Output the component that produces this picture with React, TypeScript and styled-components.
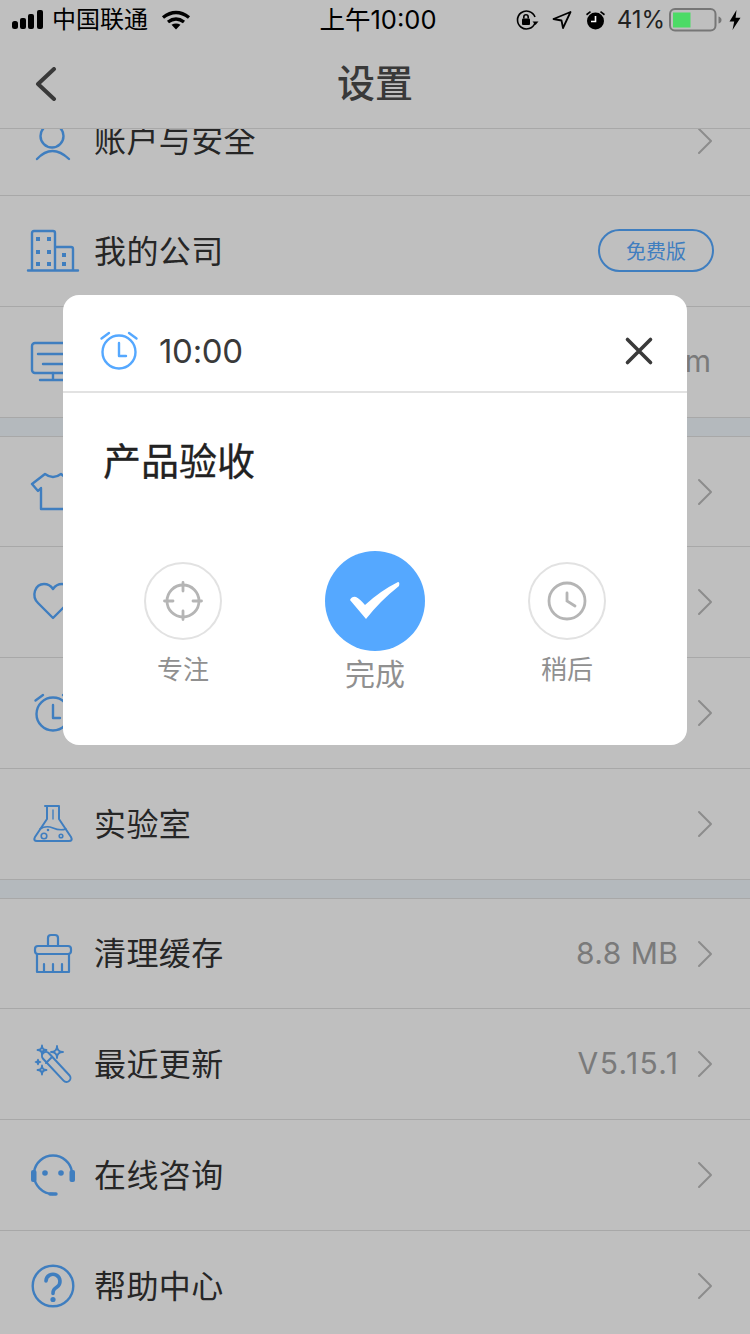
import React from "react";
import styled, { createGlobalStyle } from "styled-components";

const FONT = `Inter, "Noto Sans CJK SC", sans-serif`;

const GlobalStyle = createGlobalStyle`
  html, body {
    margin: 0;
    padding: 0;
    background: #fff;
    font-family: ${FONT};
  }
  * {
    box-sizing: border-box;
  }
`;

const LineIcon = ({ children }: { children: React.ReactNode }) => (
  <IconSvg viewBox="0 0 50 50" fill="none" stroke="currentColor" strokeWidth="2.4" strokeLinecap="round" strokeLinejoin="round">
    {children}
  </IconSvg>
);

const star = (x: number, y: number, s: number) =>
  `M${x} ${y - s}Q${x} ${y} ${x + s} ${y}Q${x} ${y} ${x} ${y + s}Q${x} ${y} ${x - s} ${y}Q${x} ${y} ${x} ${y - s}Z`;

const AlarmShape = () => (
  <>
    <circle cx="25" cy="26" r="16.5" />
    <path d="M25 17V30H32" />
    <path d="M7.5 12.5L15 7M42.5 12.5L35 7" />
  </>
);

const PersonIcon = () => (
  <LineIcon>
    <circle cx="24" cy="20" r="11.5" />
    <path d="M9 43Q24 27 41 43" />
  </LineIcon>
);

const BuildingIcon = () => (
  <LineIcon>
    <path d="M0 44.5H50M4 44V7Q4 5 6 5H25Q27 5 27 7V44M27 21H43Q45 21 45 23V44" />
    <g fill="currentColor" stroke="none">
      {[13, 26, 38].flatMap((y) => [10, 21].map((x) => <rect key={`${x}-${y}`} x={x - 2} y={y - 2} width="4" height="4" />))}
      {[29, 38].map((y) => <rect key={y} x="34" y={y - 2} width="4" height="4" />)}
    </g>
  </LineIcon>
);

const MonitorIcon = () => (
  <LineIcon>
    <rect x="4" y="6" width="42" height="30" rx="3" />
    <path d="M10 17H40M15 27H35M25 36V43M12 43H38" />
  </LineIcon>
);

const ShirtIcon = () => (
  <LineIcon>
    <path d="M4 17L17 7Q25 13 33 7L46 17L40 24L37 21V42H13V21L10 24Z" />
  </LineIcon>
);

const HeartIcon = () => (
  <LineIcon>
    <path d="M25 41L10 26C3 19 7 7 16 7C20 7 23 9 25 12C27 9 30 7 34 7C43 7 47 19 40 26Z" />
  </LineIcon>
);

const AlarmIcon = () => (
  <LineIcon>
    <AlarmShape />
  </LineIcon>
);

const FlaskIcon = () => (
  <LineIcon>
    <path d="M17 7H31M19 7V20L7 38Q5 42 9 42H41Q45 42 43 38L31 20V7" strokeWidth="2" />
    <path d="M12 30Q18 26 25 29T38 30" strokeWidth="1.6" />
    <path d="M25 11V20" strokeWidth="1.4" />
    <circle cx="16" cy="37" r="2.8" strokeWidth="1.6" />
    <circle cx="33" cy="37" r="1.8" strokeWidth="1.6" />
    <circle cx="20" cy="31" r="0.6" strokeWidth="1.4" />
  </LineIcon>
);

const BroomIcon = () => (
  <LineIcon>
    <path d="M20 17V9Q20 6 23 6H27Q30 6 30 9V17" strokeWidth="2.2" />
    <rect x="7" y="17" width="36" height="8" rx="3" strokeWidth="2.2" />
    <path d="M9 25V43H41V25M16 35V43M25 35V43M34 35V43" strokeWidth="2.2" />
  </LineIcon>
);

const WandIcon = () => (
  <LineIcon>
    <rect x="-4" y="-4" width="8" height="38" rx="4" transform="translate(18 17) rotate(-43)" strokeWidth="2" />
    <path d="M18 24L24 18" strokeWidth="2" />
    <path d={star(29, 13, 6)} strokeWidth="1.8" />
    <path d={star(14, 11, 4.5)} strokeWidth="1.8" />
    <path d={star(10, 23, 2.5)} strokeWidth="1.6" />
    <path d={star(14, 31, 4.5)} strokeWidth="1.8" />
  </LineIcon>
);

const HeadsetIcon = () => (
  <LineIcon>
    <path d="M44 22A19.2 19.2 0 0 0 6 22V25A19.2 19.2 0 0 0 25 44" />
    <path d="M22 44H28" strokeWidth="3.4" />
    <g fill="currentColor" stroke="none">
      <rect x="3" y="20" width="5.5" height="12" rx="2" />
      <rect x="41.5" y="20" width="5.5" height="12" rx="2" />
      <circle cx="17" cy="23" r="2.8" />
      <circle cx="33" cy="23" r="2.8" />
    </g>
  </LineIcon>
);

const HelpIcon = () => (
  <LineIcon>
    <circle cx="25" cy="25" r="20.3" />
    <path d="M18 20A7 7 0 1 1 29 26C26 28 25 29 25 32.5" strokeWidth="3.6" />
    <circle cx="25" cy="38.5" r="2.6" fill="currentColor" stroke="none" />
  </LineIcon>
);

const Chevron = () => (
  <ChevronSvg viewBox="0 0 18 28" fill="none" stroke="currentColor" strokeWidth="2" strokeLinecap="round" strokeLinejoin="round">
    <path d="M3 2L15 14L3 26" />
  </ChevronSvg>
);

type RowData = {
  icon: React.ReactNode;
  label?: string;
  value?: string;
  spacing?: number;
  badge?: string;
  arrow?: boolean;
};

const sections: RowData[][] = [
  [
    { icon: <PersonIcon />, label: "账户与安全", arrow: true },
    { icon: <BuildingIcon />, label: "我的公司", badge: "免费版" },
    { icon: <MonitorIcon />, value: "m" },
  ],
  [
    { icon: <ShirtIcon />, arrow: true },
    { icon: <HeartIcon />, arrow: true },
    { icon: <AlarmIcon />, arrow: true },
    { icon: <FlaskIcon />, label: "实验室", arrow: true },
  ],
  [
    { icon: <BroomIcon />, label: "清理缓存", value: "8.8 MB", spacing: 0.5, arrow: true },
    { icon: <WandIcon />, label: "最近更新", value: "V5.15.1", spacing: 1.4, arrow: true },
    { icon: <HeadsetIcon />, label: "在线咨询", arrow: true },
    { icon: <HelpIcon />, label: "帮助中心", arrow: true },
  ],
];

const App = () => {
  return (
    <Page>
      <GlobalStyle />
      <StatusBar>
        <StatusLeft>
          <svg width="34" height="20" viewBox="0 0 34 20" fill="#000">
            <rect x="0" y="11" width="6" height="8" rx="2.5" />
            <rect x="8" y="8" width="6" height="11" rx="2" />
            <rect x="16" y="4" width="6" height="15" rx="2" />
            <rect x="25" y="0" width="6" height="19" rx="2" />
          </svg>
          <Carrier>中国联通</Carrier>
          <svg width="30" height="20" viewBox="0 0 30 20" fill="none" stroke="#000" strokeWidth="3.4">
            <path d="M2 7.5Q15 -2.5 28 7.5" />
            <path d="M7 12Q15 6 23 12" />
            <path d="M15 19.5L10.5 14.8Q15 12 19.5 14.8Z" fill="#000" stroke="none" />
          </svg>
        </StatusLeft>
        <Clock>上午10:00</Clock>
        <StatusRight>
          <svg width="24" height="20" viewBox="0 0 24 20" fill="none" stroke="#000" strokeWidth="1.6">
            <path d="M20 13A9 9 0 1 1 20 7" />
            <path d="M17.5 11.5H23.5L20.5 15Z" fill="#000" stroke="none" />
            <rect x="7" y="8.5" width="8" height="6.5" rx="1" fill="#000" stroke="none" />
            <path d="M8.8 8.5V7A2.2 2.2 0 0 1 13.2 7V8.5" />
          </svg>
          <svg width="20" height="18" viewBox="0 0 20 18" fill="none" stroke="#000" strokeWidth="1.8" strokeLinejoin="round">
            <path d="M1.5 8L18.5 1L11 17L9.5 9.5Z" />
          </svg>
          <svg width="21" height="20" viewBox="0 0 21 20" fill="#000">
            <circle cx="10.5" cy="11" r="8.5" />
            <path d="M1 4L5 1L6 2.2L2 5.4ZM20 4L16 1L15 2.2L19 5.4Z" />
            <path d="M10.5 6V11.5H6" fill="none" stroke="#fff" strokeWidth="1.6" />
          </svg>
          <Battery>41%</Battery>
          <BatterySvg width="54" height="24" viewBox="0 0 54 24" fill="none">
            <rect x="1" y="1" width="45.5" height="21.5" rx="5" stroke="#767676" strokeWidth="2" />
            <rect x="4" y="4.5" width="17.5" height="15" fill="#4cdb66" />
            <path d="M49.5 8.5Q52.5 9.5 52.5 12Q52.5 14.5 49.5 15.5Z" fill="#767676" />
          </BatterySvg>
          <svg width="12" height="20" viewBox="0 0 12 20" fill="#000">
            <path d="M7.5 0L0.5 11.5H5.2L3.5 20L11.5 7.8H6.6Z" />
          </svg>
        </StatusRight>
      </StatusBar>

      <NavBar>
        <BackButton viewBox="0 0 22 34" fill="none" stroke="currentColor" strokeWidth="4" strokeLinecap="round" strokeLinejoin="round">
          <path d="M19 2L3 17L19 32" />
        </BackButton>
        <NavTitle>设置</NavTitle>
      </NavBar>

      <ScrollArea>
        <ScrollContent>
          {sections.map((rows, i) => (
            <Section key={i}>
              {rows.map((row, j) => (
                <Row key={j}>
                  <IconBox>{row.icon}</IconBox>
                  <Label>{row.label}</Label>
                  {row.value && <Value $spacing={row.spacing ?? 0}>{row.value}</Value>}
                  {row.badge && <Badge>{row.badge}</Badge>}
                  {row.arrow && <Chevron />}
                </Row>
              ))}
            </Section>
          ))}
        </ScrollContent>
      </ScrollArea>

      <Overlay>
        <Modal>
          <ModalHeader>
            <ModalAlarm>
              <AlarmIcon />
            </ModalAlarm>
            <ModalTime>10:00</ModalTime>
            <CloseButton viewBox="0 0 30 30" fill="none" stroke="currentColor" strokeWidth="3.6" strokeLinecap="round">
              <path d="M3.5 3.5L26.5 26.5M26.5 3.5L3.5 26.5" />
            </CloseButton>
          </ModalHeader>
          <ModalTitle>产品验收</ModalTitle>
          <Actions>
            <Action>
              <ActionCircle>
                <ActionSvg viewBox="0 0 50 50" fill="none" stroke="currentColor" strokeWidth="2.8" strokeLinecap="round">
                  <circle cx="25" cy="25" r="16" />
                  <path d="M25 6.5V15M25 35V43.5M6.5 25H15M35 25H43.5" />
                </ActionSvg>
              </ActionCircle>
              <ActionLabel>专注</ActionLabel>
            </Action>
            <Action $primary>
              <ActionCircle $primary>
                <svg width="100" height="100" viewBox="0 0 100 100" fill="#fff">
                  <path d="M25 49Q27 45 31 46Q35 48 40 54Q55 40 73 31Q75 31 74 35Q55 50 41 68Z" />
                </svg>
              </ActionCircle>
              <ActionLabel $primary>完成</ActionLabel>
            </Action>
            <Action>
              <ActionCircle>
                <ActionSvg viewBox="0 0 50 50" fill="none" stroke="currentColor" strokeWidth="2.8" strokeLinecap="round">
                  <circle cx="25" cy="25" r="18" />
                  <path d="M25 17V25L33 30" />
                </ActionSvg>
              </ActionCircle>
              <ActionLabel>稍后</ActionLabel>
            </Action>
          </Actions>
        </Modal>
      </Overlay>
    </Page>
  );
};

const Page = styled.div`
  position: relative;
  width: 750px;
  height: 1334px;
  overflow: hidden;
  background: #fff;
  display: flex;
  flex-direction: column;
`;

const StatusBar = styled.div`
  position: relative;
  z-index: 2;
  height: 40px;
  padding: 0 9px 0 12px;
  display: grid;
  grid-template-columns: 1fr auto 1fr;
  align-items: center;
  color: #000;
`;

const StatusLeft = styled.div`
  display: flex;
  align-items: center;
  gap: 6px;

  svg:last-child {
    margin-left: 7px;
  }
`;

const Carrier = styled.span`
  font-size: 24px;
  line-height: 40px;
`;

const Clock = styled.span`
  font-size: 25.5px;
  line-height: 40px;
  padding-left: 3px;
`;

const StatusRight = styled.div`
  display: flex;
  align-items: center;
  justify-content: flex-end;
  gap: 13px;
`;

const Battery = styled.span`
  font-size: 24px;
  line-height: 40px;
  color: #222;
  margin: 0 -9px 0 -2px;
`;

const BatterySvg = styled.svg`
  margin-right: -7px;
`;

const NavBar = styled.div`
  position: relative;
  height: 89px;
  flex-shrink: 0;
  display: flex;
  align-items: center;
  justify-content: center;
  border-bottom: 1px solid #e0e0e0;
  padding-bottom: 7px;
`;

const BackButton = styled.svg`
  position: absolute;
  left: 35px;
  top: 27px;
  width: 22px;
  height: 34px;
  color: #4d4d4d;
`;

const NavTitle = styled.h1`
  margin: 0;
  font-size: 38px;
  font-weight: 500;
  color: #4d4d4d;
`;

const ScrollArea = styled.div`
  flex: 1;
  min-height: 0;
  overflow: hidden;
`;

const ScrollContent = styled.div`
  margin-top: -44px;
  background: #f1f7fd;
  display: flex;
  flex-direction: column;
  gap: 18px;
`;

const Section = styled.section`
  background: #fff;
  border-top: 1px solid #e0e0e0;
`;

const Row = styled.div`
  height: 111px;
  padding: 0 36px 0 28px;
  display: flex;
  align-items: center;
  border-bottom: 1px solid #e0e0e0;

  &:first-child {
    height: 110px;
  }
`;

const IconBox = styled.div`
  width: 50px;
  height: 50px;
  flex-shrink: 0;
  margin-right: 16px;
  color: #55a8ff;
`;

const IconSvg = styled.svg`
  display: block;
  width: 50px;
  height: 50px;
  overflow: visible;
`;

const Label = styled.span`
  flex: 1;
  font-size: 32px;
  letter-spacing: 0.4px;
  color: #333;
  padding-bottom: 5px;
`;

const Value = styled.span<{ $spacing: number }>`
  font-size: 30px;
  letter-spacing: ${(p) => p.$spacing}px;
  color: #a3a3a3;
  margin-right: ${(p) => 3 - p.$spacing}px;
  padding-bottom: 2px;
`;

const Badge = styled.span`
  width: 116px;
  height: 43px;
  margin-bottom: 2px;
  border: 2px solid #55a8ff;
  border-radius: 22px;
  display: flex;
  align-items: center;
  justify-content: center;
  font-size: 20px;
  color: #55a8ff;
`;

const ChevronSvg = styled.svg`
  width: 18px;
  height: 28px;
  margin-left: 15px;
  color: #bbb;
`;

const Overlay = styled.div`
  position: absolute;
  inset: 0;
  z-index: 1;
  padding-top: 295px;
  display: flex;
  justify-content: center;
  align-items: flex-start;
  background: rgba(0, 0, 0, 0.25);
`;

const Modal = styled.div`
  width: 624px;
  height: 450px;
  background: #fff;
  border-radius: 16px;
`;

const ModalHeader = styled.div`
  height: 98px;
  padding: 16px 31px 0 31px;
  display: flex;
  align-items: center;
  border-bottom: 2px solid #e2e2e2;
`;

const ModalAlarm = styled.div`
  width: 50px;
  height: 50px;
  margin-right: 15px;
  color: #55a8ff;
`;

const ModalTime = styled.span`
  flex: 1;
  font-size: 33px;
  letter-spacing: -0.3px;
  color: #3a3a3a;
`;

const CloseButton = styled.svg`
  width: 30px;
  height: 30px;
  color: #3a3a3a;
  margin-right: 2px;
`;

const ModalTitle = styled.h2`
  margin: 43px 0 0 40px;
  font-size: 38px;
  line-height: 50px;
  font-weight: 400;
  -webkit-text-stroke: 0.3px #222;
  color: #222;
`;

const Actions = styled.div`
  margin-top: 65px;
  padding: 0 81px;
  display: flex;
  justify-content: space-between;
  align-items: flex-start;
`;

const Action = styled.div<{ $primary?: boolean }>`
  display: flex;
  flex-direction: column;
  align-items: center;
  margin-top: ${(p) => (p.$primary ? "0" : "11px")};
`;

const ActionCircle = styled.div<{ $primary?: boolean }>`
  width: ${(p) => (p.$primary ? "100px" : "78px")};
  height: ${(p) => (p.$primary ? "100px" : "78px")};
  border-radius: 50%;
  display: flex;
  align-items: center;
  justify-content: center;
  background: ${(p) => (p.$primary ? "#55a8ff" : "#fff")};
  border: ${(p) => (p.$primary ? "none" : "2px solid #e2e2e2")};
  color: #b5b5b5;
`;

const ActionSvg = styled.svg`
  width: 50px;
  height: 50px;
  flex-shrink: 0;
`;

const ActionLabel = styled.span<{ $primary?: boolean }>`
  margin-top: ${(p) => (p.$primary ? "3px" : "12px")};
  font-size: ${(p) => (p.$primary ? "30px" : "26px")};
  line-height: ${(p) => (p.$primary ? "40px" : "36px")};
  color: #909090;
`;

export default App;
